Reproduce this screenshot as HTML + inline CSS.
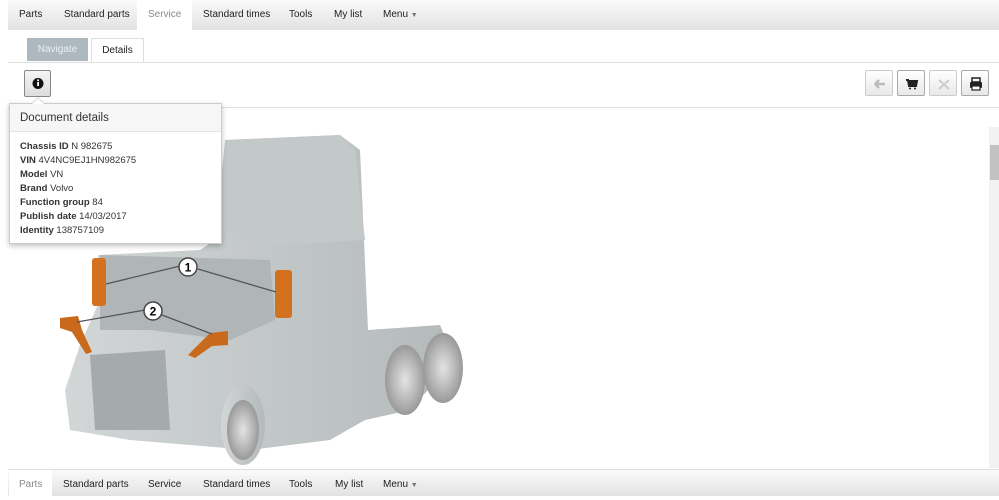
<!DOCTYPE html>
<html><head><meta charset="utf-8"><style>
*{margin:0;padding:0;box-sizing:border-box}
body{width:999px;height:496px;overflow:hidden;background:#fff;font-family:"Liberation Sans",Arial,sans-serif;font-size:11px;color:#222;position:relative}
.nav{position:absolute;left:8px;right:0;height:30px;background:linear-gradient(#fafafa,#e2e2e2);font-size:10px}
.nav span{position:absolute;white-space:nowrap;top:0}
.abs{position:absolute}
.btn{position:absolute;top:70px;width:28px;height:26px;border:1px solid #ccc;border-radius:2px;background:linear-gradient(#fff,#e8e8e8)}
</style></head><body>
<div class="nav" style="top:0;line-height:30px">
<div class="abs" style="left:129px;top:0;width:55px;height:30px;background:#fff"></div>
<span style="left:11px">Parts</span><span style="left:56px">Standard parts</span><span style="left:140px;color:#888">Service</span><span style="left:195px">Standard times</span><span style="left:281px">Tools</span><span style="left:326px">My list</span><span style="left:375px">Menu <small style="font-size:7px;color:#777">▼</small></span>
</div>
<div class="abs" style="left:27px;top:38px;width:61px;height:23px;background:#aeb8bf;color:#e8eef2;text-align:center;line-height:23px;font-size:10px">Navigate</div>
<div class="abs" style="left:91px;top:38px;width:53px;height:25px;border:1px solid #ddd;border-bottom:none;background:#fff;text-align:center;line-height:23px;font-size:10px">Details</div>
<div class="abs" style="left:8px;right:0;top:62px;height:1px;background:#ddd"></div>
<div class="btn" style="left:24px;width:27px;height:27px;background:linear-gradient(#f4f4f4,#ddd);border-color:#888"><svg width="27" height="27"><circle cx="13" cy="12.5" r="5.5" fill="#111"/><rect x="12.2" y="11" width="1.8" height="4" fill="#fff"/><circle cx="13.1" cy="9.3" r="1" fill="#fff"/></svg></div>
<div class="btn" style="left:865px"><svg width="28" height="26"><path d="M9 13h10M9 13l4-4M9 13l4 4" stroke="#bbb" stroke-width="2.5" fill="none"/></svg></div>
<div class="btn" style="left:897px;border-color:#aaa"><svg width="28" height="26"><path d="M8 9h2l1 6h7l1-5h-9" stroke="#222" stroke-width="2" fill="#222"/><circle cx="12" cy="17.5" r="1" fill="#222"/><circle cx="17" cy="17.5" r="1" fill="#222"/></svg></div>
<div class="btn" style="left:929px"><svg width="28" height="26"><path d="M9 9l10 9M19 9l-10 9" stroke="#ccc" stroke-width="2"/></svg></div>
<div class="btn" style="left:961px;border-color:#aaa"><svg width="28" height="26"><rect x="10" y="7" width="8" height="4" fill="none" stroke="#222" stroke-width="1.5"/><rect x="8" y="11" width="12" height="6" rx="1" fill="#222"/><rect x="10" y="15" width="8" height="4" fill="#fff" stroke="#222" stroke-width="1.2"/></svg></div>
<div class="abs" style="left:8px;right:0;top:107px;height:1px;background:#ddd"></div>
<div class="abs" style="left:989px;top:127px;width:10px;height:341px;background:#f2f2f2"></div>
<div class="abs" style="left:990px;top:145px;width:9px;height:35px;background:#c2c2c2"></div>
<svg class="abs" style="left:0;top:108px" width="989" height="362" viewBox="0 108 989 362">
<defs><linearGradient id="g" x1="0" x2="1"><stop offset="0" stop-color="#d2d6d7"/><stop offset="1" stop-color="#b4b9ba"/></linearGradient>
<radialGradient id="w"><stop offset="0" stop-color="#e4e4e4"/><stop offset="0.6" stop-color="#b8b8b8"/><stop offset="1" stop-color="#999"/></radialGradient></defs>
<path d="M225 140 L340 135 L360 150 L368 330 L440 325 L455 360 L410 410 L365 420 L330 440 L250 450 L130 440 L70 430 L65 390 L80 345 L100 300 L98 255 L200 250 L215 240 Z" fill="url(#g)"/>
<path d="M225 140 L340 135 L355 150 L365 240 L280 245 L225 230 Z" fill="#c3c8c9"/>
<path d="M100 255 L270 260 L275 320 L230 340 L150 330 L100 330 Z" fill="#b0b6b8"/>
<path d="M90 355 L165 350 L170 430 L95 430 Z" fill="#a5abad"/>
<ellipse cx="243" cy="425" rx="22" ry="40" fill="url(#g)"/><ellipse cx="243" cy="430" rx="16" ry="30" fill="url(#w)"/>
<ellipse cx="405" cy="380" rx="20" ry="35" fill="url(#w)"/><ellipse cx="443" cy="368" rx="20" ry="35" fill="url(#w)"/>
<rect x="92" y="258" width="14" height="48" rx="3" fill="#d4711e"/>
<rect x="275" y="270" width="17" height="48" rx="3" fill="#d4711e"/>
<path d="M60 318 L78 316 L82 330 L92 352 L86 354 L72 332 L60 328 Z" fill="#c8691c"/>
<path d="M210 333 L228 331 L228 345 L212 346 L195 358 L188 355 Z" fill="#c8691c"/>
<g stroke="#555" stroke-width="1.3" fill="none"><path d="M106 284 L180 266 M198 269 L276 292 M77 322 L145 310 M162 315 L212 334"/></g>
<circle cx="188" cy="267" r="9" fill="#fff" stroke="#444" stroke-width="1.5"/><text x="188" y="271.5" font-size="12" font-weight="bold" text-anchor="middle" font-family="Liberation Sans">1</text>
<circle cx="153" cy="311" r="9" fill="#fff" stroke="#444" stroke-width="1.5"/><text x="153" y="315.5" font-size="12" font-weight="bold" text-anchor="middle" font-family="Liberation Sans">2</text>
</svg>
<div class="abs" style="left:9px;top:103px;width:213px;height:141px;background:#fff;border:1px solid #ccc;box-shadow:0 2px 5px rgba(0,0,0,.25)">
<div style="height:28px;background:#f6f6f6;border-bottom:1px solid #e4e4e4;padding:8px 10px;font-size:11.5px;color:#333">Document details</div>
<div style="padding:8px 10px 0;line-height:14px;font-size:9.5px;color:#333">
<b>Chassis ID</b> N 982675<br><b>VIN</b> 4V4NC9EJ1HN982675<br><b>Model</b> VN<br><b>Brand</b> Volvo<br><b>Function group</b> 84<br><b>Publish date</b> 14/03/2017<br><b>Identity</b> 138757109</div></div>
<div class="abs" style="left:31px;top:97px;width:0;height:0;border:7px solid transparent;border-top:none;border-bottom:7px solid #ccc"></div>
<div class="abs" style="left:32px;top:98px;width:0;height:0;border:6px solid transparent;border-top:none;border-bottom:6px solid #fff"></div>
<div class="abs" style="left:8px;right:0;top:469px;height:1px;background:#ddd"></div>
<div class="nav" style="top:470px;height:26px;line-height:29px">
<div class="abs" style="left:1px;top:0;width:43px;height:26px;background:#fff"></div>
<span style="left:11px;color:#888">Parts</span><span style="left:55px">Standard parts</span><span style="left:140px">Service</span><span style="left:195px">Standard times</span><span style="left:281px">Tools</span><span style="left:327px">My list</span><span style="left:375px">Menu <small style="font-size:7px;color:#777">▼</small></span>
</div>
</body></html>
